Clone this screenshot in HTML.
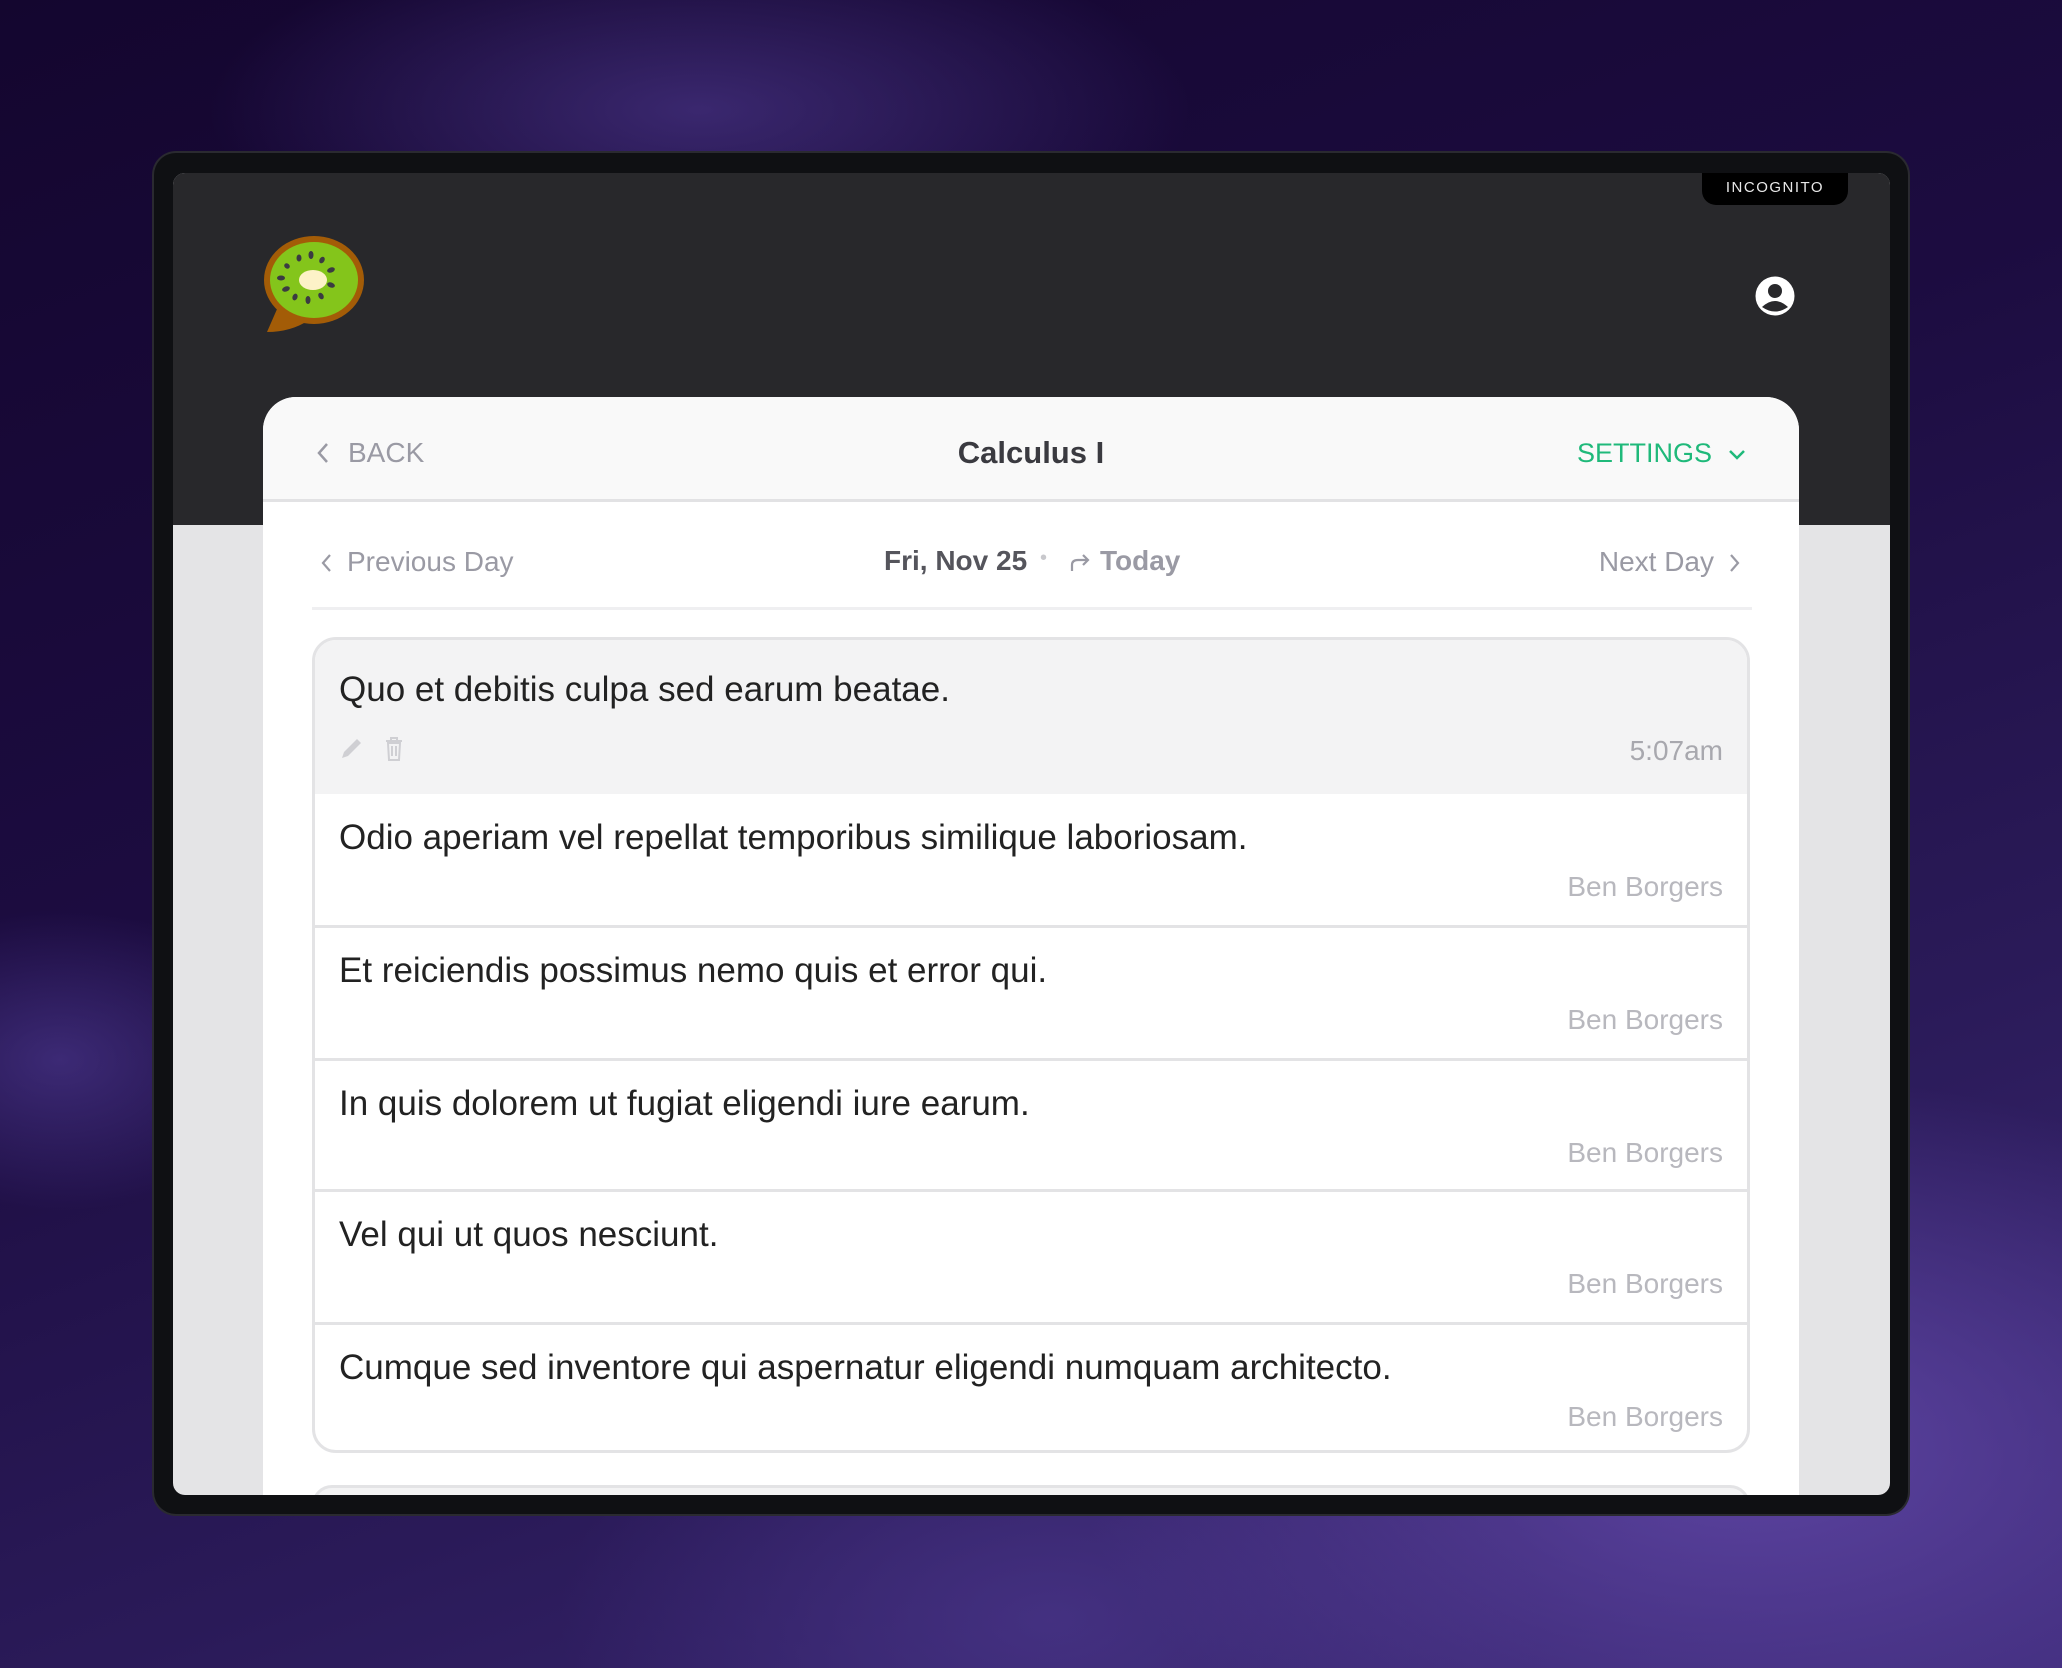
<!DOCTYPE html>
<html><head><meta charset="utf-8"><style>
*{margin:0;padding:0;box-sizing:border-box}
body{width:2062px;height:1668px;overflow:hidden;position:relative;font-family:"Liberation Sans",sans-serif;
background:
radial-gradient(ellipse 700px 260px at 700px 110px,rgba(70,50,130,.75),rgba(70,50,130,0) 70%),
radial-gradient(ellipse 300px 200px at 60px 1060px,rgba(80,60,150,.6),rgba(80,60,150,0) 75%),
radial-gradient(ellipse 900px 500px at 1750px 1450px,rgba(95,70,165,.95),rgba(95,70,165,0) 75%),
radial-gradient(ellipse 700px 400px at 1050px 1620px,rgba(75,55,140,.7),rgba(75,55,140,0) 70%),
linear-gradient(160deg,#14062f 0%,#1c0c40 40%,#2a1a58 70%,#3d2a78 100%);}
.dev{position:absolute;left:154px;top:153px;width:1754px;height:1361px;background:#0f1013;border-radius:22px;box-shadow:0 0 0 2px #2a2a30;}
.scr{position:absolute;left:173px;top:173px;width:1717px;height:1322px;border-radius:12px;overflow:hidden;background:#e4e4e6;}
.hdr{position:absolute;left:0;top:0;width:100%;height:352px;background:#28282b;}
.pill{position:absolute;left:1529px;top:0;width:146px;height:32px;background:#000;border-radius:0 0 14px 14px;color:#e8e8e8;font-size:15px;letter-spacing:1.5px;text-align:center;line-height:30px;}
.card{position:absolute;left:90px;top:224px;width:1536px;height:1200px;background:#fff;border-radius:33px 33px 0 0;overflow:hidden;}
.ch{height:105px;background:#f9f9f9;border-bottom:3px solid #e2e2e4;position:relative;}
.t{position:absolute;white-space:nowrap;}
.list{position:absolute;left:49px;top:240px;width:1438px;height:816px;border:3px solid #e3e3e5;border-radius:24px;overflow:hidden;}
.row{position:absolute;left:0;width:100%;border-top:3px solid #e3e3e5;}
.txt{position:absolute;left:24px;font-size:35px;color:#222;}
.au{position:absolute;right:24px;font-size:28px;color:#b8b8be;}
</style></head><body>
<div class="dev"></div>
<div class="scr">
 <div class="hdr"></div>
 <div class="pill">INCOGNITO</div>
 <svg style="position:absolute;left:88px;top:55px" width="110" height="110" viewBox="0 0 110 110">
  <path d="M20 72 L6 104 Q30 104 48 92 Z" fill="#a35c07"/>
  <ellipse cx="53" cy="52" rx="50" ry="44" fill="#a35c07"/>
  <ellipse cx="53" cy="52" rx="44" ry="38" fill="#84c51b"/>
  <ellipse cx="52" cy="52" rx="14" ry="10" fill="#fdf2c8"/>
  <g fill="#3b3b42">
   <ellipse cx="20" cy="50" rx="4" ry="2.5"/><ellipse cx="26" cy="38" rx="3" ry="2.5" transform="rotate(40 26 38)"/>
   <ellipse cx="38" cy="30" rx="2.5" ry="3.5"/><ellipse cx="50" cy="27" rx="2.5" ry="4"/><ellipse cx="61" cy="32" rx="2.5" ry="3.5" transform="rotate(30 61 32)"/>
   <ellipse cx="70" cy="42" rx="4" ry="2.5" transform="rotate(-20 70 42)"/><ellipse cx="70" cy="57" rx="4" ry="2.5" transform="rotate(20 70 57)"/>
   <ellipse cx="60" cy="68" rx="2.5" ry="3.5" transform="rotate(-30 60 68)"/><ellipse cx="47" cy="72" rx="2.5" ry="4"/>
   <ellipse cx="34" cy="69" rx="2.5" ry="3.5" transform="rotate(20 34 69)"/><ellipse cx="25" cy="61" rx="4" ry="2.5" transform="rotate(-20 25 61)"/>
  </g>
 </svg>
 <svg style="position:absolute;left:1582px;top:103px" width="40" height="40" viewBox="0 0 40 40">
  <circle cx="20" cy="20" r="19.5" fill="#fff"/>
  <circle cx="20" cy="15" r="7" fill="#28282b"/>
  <path d="M7 31 Q20 19 33 31 Q20 40 7 31Z" fill="#28282b"/>
 </svg>
 <div class="card">
  <div class="ch">
   <svg class="t" style="left:53px;top:45px" width="14" height="22" viewBox="0 0 14 22"><path d="M11 2 L3 11 L11 20" fill="none" stroke="#9a9aa4" stroke-width="2.5"/></svg>
   <div class="t" style="left:85px;top:40px;font-size:28px;color:#9a9aa4;">BACK</div>
   <div class="t" style="left:0;width:1536px;text-align:center;top:38px;font-size:31px;color:#3a3a40;font-weight:bold;">Calculus I</div>
   <div class="t" style="left:1314px;top:41px;font-size:27px;color:#1fb97a;">SETTINGS</div>
   <svg class="t" style="left:1465px;top:52px" width="18" height="12" viewBox="0 0 18 12"><path d="M2 2 L9 9 L16 2" fill="none" stroke="#1fb97a" stroke-width="2.5"/></svg>
  </div>
  <svg class="t" style="left:57px;top:156px" width="12" height="20" viewBox="0 0 12 20"><path d="M10 2 L3 10 L10 18" fill="none" stroke="#9a9aa4" stroke-width="2.2"/></svg>
  <div class="t" style="left:84px;top:149px;font-size:28px;color:#9a9aa4;">Previous Day</div>
  <div class="t" style="left:621px;top:148px;font-size:28px;color:#55555c;font-weight:bold;">Fri, Nov 25</div>
  <div class="t" style="left:777px;top:150px;font-size:20px;color:#c8c8cc;">•</div>
  <svg class="t" style="left:805px;top:156px" width="24" height="20" viewBox="0 0 24 20"><path d="M4 18 V12 Q4 7 10 7 H20 M15 2 L20 7 L15 12" fill="none" stroke="#9a9aa4" stroke-width="2.2"/></svg>
  <div class="t" style="left:837px;top:148px;font-size:28px;color:#9a9aa4;font-weight:bold;">Today</div>
  <div class="t" style="right:85px;top:149px;font-size:28px;color:#9a9aa4;">Next Day</div>
  <svg class="t" style="left:1466px;top:156px" width="12" height="20" viewBox="0 0 12 20"><path d="M2 2 L9 10 L2 18" fill="none" stroke="#9a9aa4" stroke-width="2.2"/></svg>
  <div class="t" style="left:49px;top:210px;width:1440px;height:3px;background:#efeff1;"></div>
  <div class="list">
   <div class="row" style="top:-3px;height:157px;background:#f3f3f4;border-top:none;">
    <div class="txt" style="top:33px;">Quo et debitis culpa sed earum beatae.</div>
    <svg class="t" style="left:24px;top:100px" width="24" height="24" viewBox="0 0 24 24"><path d="M3 21 L5 15 L18 2 L22 6 L9 19Z" fill="#cfcfd3"/></svg>
    <svg class="t" style="left:70px;top:99px" width="18" height="26" viewBox="0 0 18 26"><path d="M1 5 H17 M6 5 V2 H12 V5 M3 7 L4 24 H14 L15 7Z M7 10 V20 M11 10 V20" fill="none" stroke="#cfcfd3" stroke-width="2"/></svg>
    <div class="au" style="top:98px;color:#a8a8ae;">5:07am</div>
   </div>
   <div class="row" style="top:154px;height:131px;border-top:none;">
    <div class="txt" style="top:24px;">Odio aperiam vel repellat temporibus similique laboriosam.</div>
    <div class="au" style="top:77px;">Ben Borgers</div>
   </div>
   <div class="row" style="top:285px;height:133px;">
    <div class="txt" style="top:23px;">Et reiciendis possimus nemo quis et error qui.</div>
    <div class="au" style="top:76px;">Ben Borgers</div>
   </div>
   <div class="row" style="top:418px;height:131px;">
    <div class="txt" style="top:23px;">In quis dolorem ut fugiat eligendi iure earum.</div>
    <div class="au" style="top:76px;">Ben Borgers</div>
   </div>
   <div class="row" style="top:549px;height:133px;">
    <div class="txt" style="top:23px;">Vel qui ut quos nesciunt.</div>
    <div class="au" style="top:76px;">Ben Borgers</div>
   </div>
   <div class="row" style="top:682px;height:140px;">
    <div class="txt" style="top:23px;">Cumque sed inventore qui aspernatur eligendi numquam architecto.</div>
    <div class="au" style="top:76px;">Ben Borgers</div>
   </div>
  </div>
  <div class="t" style="left:49px;top:1088px;width:1438px;height:40px;border:3px solid #e3e3e5;border-radius:24px;background:#f3f3f4;"></div>
 </div>
</div>
</body></html>
